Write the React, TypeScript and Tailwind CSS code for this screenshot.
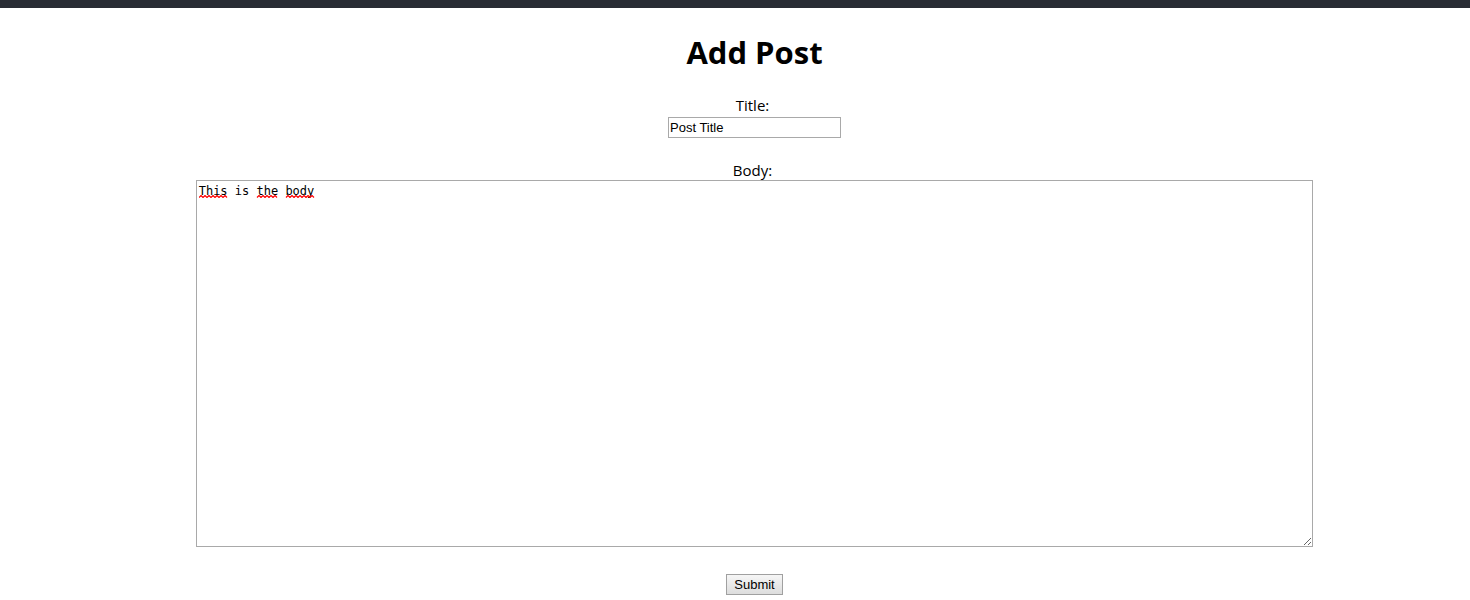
import { useState } from "react";

type Squiggle = { start: number; length: number };

const CHAR_WIDTH = 7.22;
const SQUIGGLES: Squiggle[] = [
  { start: 0, length: 4 },
  { start: 8, length: 3 },
  { start: 12, length: 4 },
];

function wavePath({ start, length }: Squiggle): string {
  const from = Math.round(start * CHAR_WIDTH);
  const to = Math.round((start + length) * CHAR_WIDTH);
  let d = `M${from} 2.5`;
  for (let x = from + 2, up = true; x <= to; x += 2, up = !up) {
    d += `L${x} ${up ? 0.5 : 2.5}`;
  }
  return d;
}

export default function App() {
  const [title, setTitle] = useState("Post Title");
  const [body, setBody] = useState("This is the body");

  return (
    <div className="bg-white font-['Open_Sans','Noto_Sans',sans-serif] text-black">
      <header className="h-2 bg-[#282c34]" />
      <main className="pl-[39px] text-center">
        <h1 className="pt-[23px] text-[31px] leading-[43px] font-bold">Add Post</h1>
        <form className="flex flex-col items-center" onSubmit={(e) => e.preventDefault()}>
          <label htmlFor="title" className="mt-5 pr-1 pb-px text-[15px] leading-[22px]">
            Title:
          </label>
          <input
            id="title"
            type="text"
            value={title}
            onChange={(e) => setTitle(e.target.value)}
            className="h-[21px] w-[173px] border border-[#a9a9a9] bg-white px-px font-['Liberation_Sans',sans-serif] text-[13px] leading-[15px]"
          />
          <label htmlFor="body" className="mt-[22px] pr-1 text-[15px] leading-5">
            Body:
          </label>
          <div className="relative w-[78.1%]">
            <textarea
              id="body"
              rows={24}
              value={body}
              spellCheck={false}
              onChange={(e) => setBody(e.target.value)}
              className="block w-full resize border border-[#a9a9a9] bg-white px-[2px] pt-[3px] pb-[2px] font-['DejaVu_Sans_Mono',monospace] text-[12px] leading-[15px]"
            />
            {body === "This is the body" && (
              <svg
                aria-hidden="true"
                className="pointer-events-none absolute top-[15px] left-[3px] h-[3px] w-[120px]"
                viewBox="0 0 120 3"
                fill="none"
                stroke="#ff0000"
                strokeWidth="1.2"
              >
                {SQUIGGLES.map((s) => (
                  <path key={s.start} d={wavePath(s)} />
                ))}
              </svg>
            )}
          </div>
          <button
            type="submit"
            className="mt-[27px] mb-[5px] h-[21px] border border-[#a0a0a0] bg-linear-to-b from-[#f6f6f6] to-[#dddddd] px-[7px] font-['Liberation_Sans',sans-serif] text-[13px] leading-[15px]"
          >
            Submit
          </button>
        </form>
      </main>
    </div>
  );
}
